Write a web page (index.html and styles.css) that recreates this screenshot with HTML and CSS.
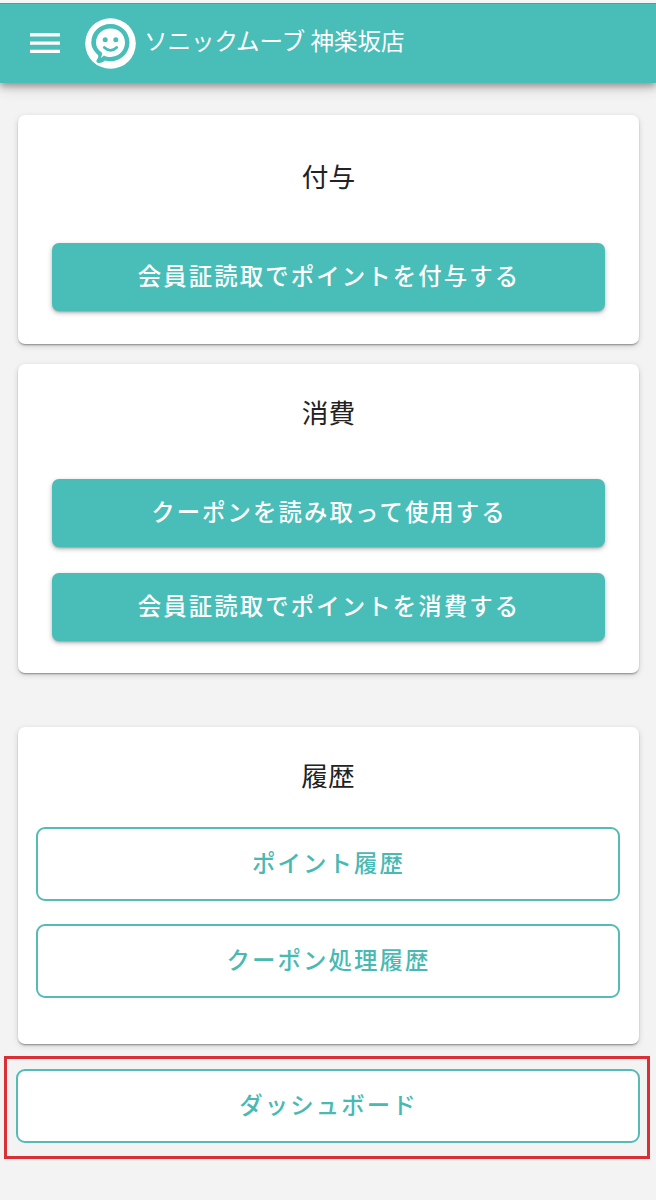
FILE: index.html
```html
<!DOCTYPE html>
<html lang="ja">
<head>
<meta charset="utf-8">
<title>ソニックムーブ 神楽坂店</title>
<link rel="stylesheet" href="styles.css">
</head>
<body>
<header class="bar">
  <svg class="menu" viewBox="0 0 30 20" aria-hidden="true"><path d="M0 1.7h30M0 10.1h30M0 18.4h30"/></svg>
  <svg class="logo" viewBox="0 0 51 51" aria-hidden="true">
    <circle cx="25.5" cy="25.5" r="25.3" fill="#fff"/>
    <path d="M13.2 37.200C9 33.500 6.300 29.500 6.300 24.500C6.300 13.800 14.800 6 25.500 6C36.200 6 44.500 14.200 44.500 24.500C44.500 35 36 43.300 25.500 43.300C23.500 43.300 21.500 42.900 20 42.500C18.200 44.200 15.900 45.200 13.300 44.900C11.300 44.600 10.900 42.700 12 41.400C13 40.300 13.500 38.800 13.200 37.200Z" fill="#49bdb8"/>
    <path d="M17 34.800C13 32.200 11 28.800 11 24.600C11 16.500 17.500 10.500 25.600 10.500C33.700 10.500 40 16.600 40 24.600C40 32.700 33.700 39 25.600 39C23.200 39 20.900 38.500 19 37.500L15.900 39.900Q17.300 37.400 17 34.800Z" fill="#fff"/>
    <circle cx="20.200" cy="21.700" r="2.500" fill="#49bdb8"/>
    <circle cx="30.800" cy="21.700" r="2.500" fill="#49bdb8"/>
    <path d="M19.300 29.500Q25.500 35.300 31.700 29.500" fill="none" stroke="#49bdb8" stroke-width="2.800" stroke-linecap="round"/>
  </svg>
  <h1 class="title">ソニックムーブ 神楽坂店</h1>
</header>
<main class="content">
  <section class="card grant">
    <h2 class="heading">付与</h2>
    <button class="btn filled">会員証読取でポイントを付与する</button>
  </section>
  <section class="card spend">
    <h2 class="heading">消費</h2>
    <button class="btn filled">クーポンを読み取って使用する</button>
    <button class="btn filled">会員証読取でポイントを消費する</button>
  </section>
  <section class="card history">
    <h2 class="heading">履歴</h2>
    <button class="btn outlined">ポイント履歴</button>
    <button class="btn outlined">クーポン処理履歴</button>
  </section>
  <div class="highlight">
    <button class="btn outlined">ダッシュボード</button>
  </div>
</main>
</body>
</html>
```
FILE: styles.css
```css
* { box-sizing: border-box; }
body {
  margin: 0;
  height: 1200px;
  border-top: 3px solid #f4f7f7;
  background: #f3f3f3;
  color: #222;
  font-family: "Noto Sans CJK JP", sans-serif;
}
.bar {
  display: flex;
  align-items: center;
  height: 80px;
  padding: 0 0 1px 30px;
  background: #49bdb8;
  border-top: 1px solid #3fa6a3;
  box-shadow: 0 3px 7px rgba(50, 20, 20, .38), 0 6px 14px rgba(0, 0, 0, .12);
}
.menu { width: 30px; height: 20px; stroke: #fff; stroke-width: 3.4; }
.logo { width: 51px; height: 51px; margin-left: 25px; }
.title {
  margin: 0 0 6px 8px;
  color: #fff;
  font-size: 23.5px;
  font-weight: 400;
  line-height: 34px;
}
.content { display: flex; flex-direction: column; padding-top: 32px; }
.card {
  display: flex;
  flex-direction: column;
  margin: 0 17px 0 18px;
  background: #fff;
  border-radius: 7px;
  box-shadow: 0 2px 2px -1px rgba(0, 0, 0, .3), 0 1px 2px rgba(0, 0, 0, .12), 0 2px 6px rgba(0, 0, 0, .14);
}
.grant { height: 229px; padding: 41px 34px 0; }
.spend { height: 309px; margin-top: 20px; padding: 28px 34px 0; }
.history { height: 317px; margin-top: 54px; padding: 28px 19px 0 18px; }
.heading {
  margin: 0;
  font-size: 26.7px;
  font-weight: 400;
  line-height: 40px;
  text-align: center;
}
.btn {
  padding: 0 0 4px 1px;
  border: 0;
  border-radius: 7px;
  font: 500 23.4px/34px "Noto Sans CJK JP", sans-serif;
  letter-spacing: 2.1px;
}
.filled {
  height: 68px;
  background: #49bdb8;
  color: #fff;
  box-shadow: 0 2px 2px -1px rgba(0, 0, 0, .2), 0 2px 5px rgba(0, 0, 0, .28);
}
.grant .filled { margin-top: 47px; }
.spend .filled { margin-top: 47px; }
.spend .filled + .filled { margin-top: 26px; }
.outlined {
  height: 74px;
  border: 2px solid #55bbb6;
  border-radius: 9px;
  background: #fff;
  color: #49b9b4;
}
.history .outlined { margin-top: 32px; }
.history .outlined + .outlined { margin-top: 23px; }
.highlight {
  display: flex;
  height: 103px;
  margin: 12px 6px 0 4px;
  padding: 10px 7px 0 9px;
  border: 3px solid #d92f35;
}
.highlight .outlined { flex: 1; }
```
